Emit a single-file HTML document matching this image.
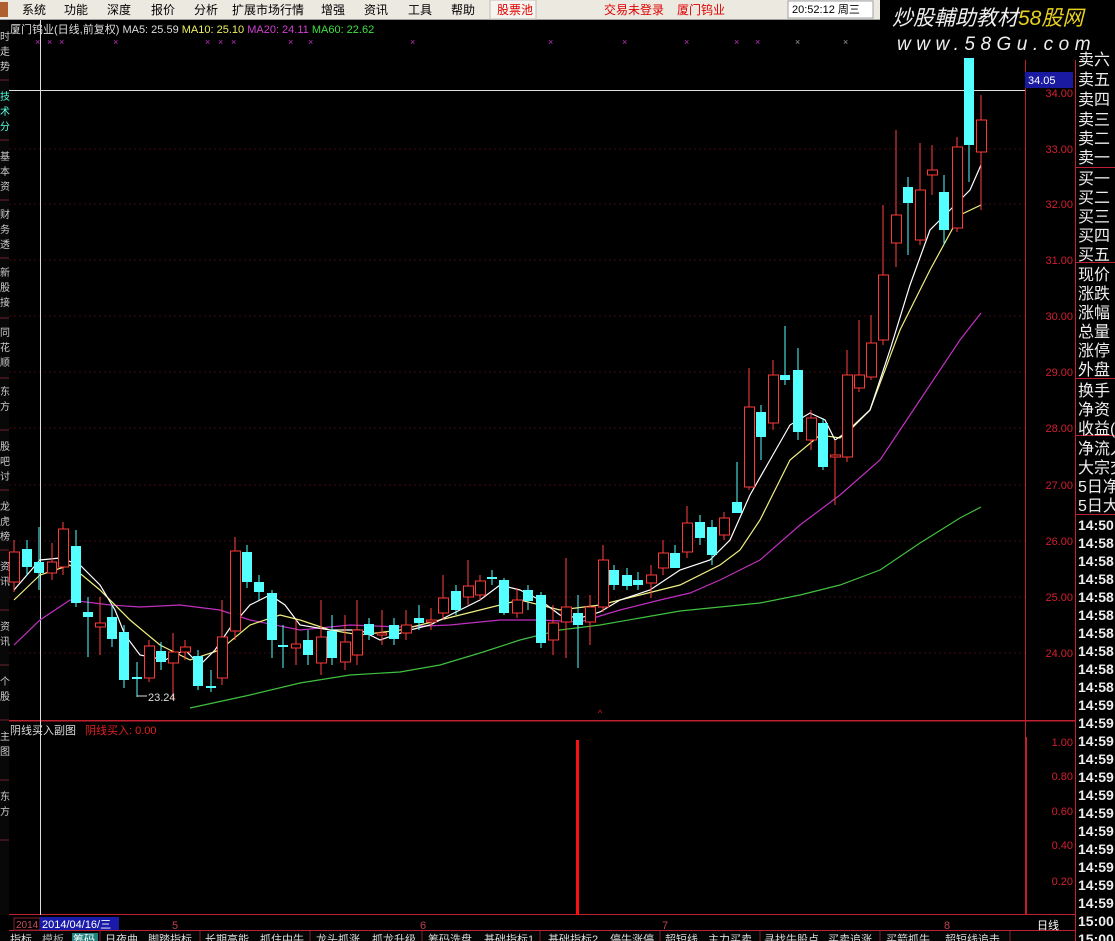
<!DOCTYPE html>
<html><head><meta charset="utf-8"><style>
html,body{margin:0;padding:0;background:#000;width:1115px;height:941px;overflow:hidden}
svg{display:block}
text{font-family:"Liberation Sans","Noto Sans CJK SC",sans-serif}
</style></head><body>
<svg width="1115" height="941" viewBox="0 0 1115 941" xmlns="http://www.w3.org/2000/svg">
<rect width="1115" height="941" fill="#000"/>
<rect x="0" y="0" width="880" height="20" fill="#ece9e1"/>
<rect x="0" y="19" width="880" height="1" fill="#a0a0a0"/>
<rect x="0" y="2" width="8" height="15" fill="#b06030"/>
<g font-size="12" fill="#000">
<text x="22" y="14">系统</text><text x="64" y="14">功能</text><text x="107" y="14">深度</text><text x="151" y="14">报价</text><text x="194" y="14">分析</text><text x="232" y="14">扩展市场行情</text><text x="321" y="14">增强</text><text x="364" y="14">资讯</text><text x="408" y="14">工具</text><text x="451" y="14">帮助</text>
</g>
<rect x="490" y="0" width="46" height="19" fill="#f6f4ee" stroke="#c0c0c0"/>
<text x="497" y="14" font-size="12" fill="#e00000">股票池</text>
<text x="604" y="14" font-size="12" fill="#e00000">交易未登录</text>
<text x="677" y="14" font-size="12" fill="#e00000">厦门钨业</text>
<rect x="788" y="1" width="85" height="17" fill="#fff" stroke="#a0a0a0"/>
<text x="792" y="13" font-size="11" fill="#000">20:52:12 周三</text>
<text x="892" y="25" font-size="21" font-style="italic" fill="#eee">炒股輔助教材<tspan fill="#e8d020">58股网</tspan></text>
<text x="897" y="50" font-size="19" font-style="italic" fill="#eee" letter-spacing="5.5">www.58Gu.com</text>
<rect x="0" y="20" width="9" height="895" fill="#080808"/>
<g stroke="#702030" stroke-width="1">
<line x1="0" y1="80" x2="9" y2="80"/><line x1="0" y1="140" x2="9" y2="140"/><line x1="0" y1="200" x2="9" y2="200"/><line x1="0" y1="258" x2="9" y2="258"/><line x1="0" y1="318" x2="9" y2="318"/><line x1="0" y1="378" x2="9" y2="378"/><line x1="0" y1="430" x2="9" y2="430"/><line x1="0" y1="490" x2="9" y2="490"/><line x1="0" y1="550" x2="9" y2="550"/><line x1="0" y1="610" x2="9" y2="610"/><line x1="0" y1="665" x2="9" y2="665"/><line x1="0" y1="720" x2="9" y2="720"/><line x1="0" y1="780" x2="9" y2="780"/><line x1="0" y1="840" x2="9" y2="840"/>
</g>
<g font-size="10" fill="#ccc">
<text x="0" y="40">时</text><text x="0" y="55">走</text><text x="0" y="70">势</text>
<text x="0" y="100" fill="#5fd">技</text><text x="0" y="115" fill="#5fd">术</text><text x="0" y="130" fill="#5fd">分</text>
<text x="0" y="160">基</text><text x="0" y="175">本</text><text x="0" y="190">资</text>
<text x="0" y="218">财</text><text x="0" y="233">务</text><text x="0" y="248">透</text>
<text x="0" y="276">新</text><text x="0" y="291">股</text><text x="0" y="306">接</text>
<text x="0" y="336">同</text><text x="0" y="351">花</text><text x="0" y="366">顺</text>
<text x="0" y="395">东</text><text x="0" y="410">方</text>
<text x="0" y="450">股</text><text x="0" y="465">吧</text><text x="0" y="480">讨</text>
<text x="0" y="510">龙</text><text x="0" y="525">虎</text><text x="0" y="540">榜</text>
<text x="0" y="570">资</text><text x="0" y="585">讯</text>
<text x="0" y="630">资</text><text x="0" y="645">讯</text>
<text x="0" y="685">个</text><text x="0" y="700">股</text>
<text x="0" y="740">主</text><text x="0" y="755">图</text>
<text x="0" y="800">东</text><text x="0" y="815">方</text>
</g>
<g stroke="#3a0a10" stroke-width="1" stroke-dasharray="2,3">
<line x1="9" y1="149" x2="1025" y2="149"/><line x1="9" y1="204" x2="1025" y2="204"/><line x1="9" y1="260" x2="1025" y2="260"/><line x1="9" y1="316" x2="1025" y2="316"/><line x1="9" y1="372" x2="1025" y2="372"/><line x1="9" y1="428" x2="1025" y2="428"/><line x1="9" y1="485" x2="1025" y2="485"/><line x1="9" y1="541" x2="1025" y2="541"/><line x1="9" y1="597" x2="1025" y2="597"/><line x1="9" y1="653" x2="1025" y2="653"/>
</g>
<text x="10" y="33" font-size="11" fill="#ddd">厦门钨业(日线,前复权) MA5: 25.59 <tspan fill="#f0f060">MA10: 25.10</tspan> <tspan fill="#d040d0">MA20: 24.11</tspan> <tspan fill="#40e040">MA60: 22.62</tspan></text>
<g font-size="9" fill="#c030c0">
<text x="35" y="45">×</text><text x="47" y="45">×</text><text x="59" y="45">×</text><text x="113" y="45">×</text><text x="205" y="45">×</text><text x="218" y="45">×</text><text x="231" y="45">×</text><text x="288" y="45">×</text><text x="308" y="45">×</text><text x="410" y="45">×</text><text x="548" y="45">×</text><text x="622" y="45">×</text><text x="684" y="45">×</text><text x="734" y="45">×</text><text x="755" y="45">×</text><text x="795" y="45" fill="#999">×</text><text x="843" y="45" fill="#999">×</text>
</g>
<rect x="1025" y="60" width="1" height="855" fill="#c02030"/>
<rect x="1075" y="60" width="1" height="881" fill="#c02030"/>
<rect x="9" y="720" width="1066" height="1.5" fill="#c02030"/>
<rect x="9" y="914" width="1066" height="1" fill="#c02030"/>
<rect x="9" y="930" width="1066" height="1" fill="#c02030"/>
<rect x="1026" y="737" width="1" height="178" fill="#c02030"/>
<g font-size="11" fill="#d02030" text-anchor="end">
<text x="1073" y="97">34.00</text><text x="1073" y="153">33.00</text><text x="1073" y="208">32.00</text><text x="1073" y="264">31.00</text><text x="1073" y="320">30.00</text><text x="1073" y="376">29.00</text><text x="1073" y="432">28.00</text><text x="1073" y="489">27.00</text><text x="1073" y="545">26.00</text><text x="1073" y="601">25.00</text><text x="1073" y="657">24.00</text>
<text x="1073" y="746">1.00</text><text x="1073" y="780">0.80</text><text x="1073" y="815">0.60</text><text x="1073" y="849">0.40</text><text x="1073" y="885">0.20</text>
</g>
<rect x="1025" y="72" width="48" height="16" fill="#1a1aa0"/>
<text x="1028" y="84" font-size="11" fill="#fff">34.05</text>
<rect x="40" y="20" width="1" height="895" fill="#ddd"/>
<rect x="9" y="90" width="1016" height="1" fill="#ddd"/>
<rect x="1075" y="167" width="40" height="1" fill="#c02030"/>
<rect x="1075" y="262" width="40" height="1" fill="#c02030"/>
<rect x="1075" y="378" width="40" height="1" fill="#c02030"/>
<rect x="1075" y="435" width="40" height="1" fill="#c02030"/>
<rect x="1075" y="514" width="40" height="1" fill="#c02030"/>
<g font-size="16" fill="#eee">
<text x="1078" y="65">卖六</text><text x="1078" y="85">卖五</text><text x="1078" y="105">卖四</text><text x="1078" y="125">卖三</text><text x="1078" y="144">卖二</text><text x="1078" y="163">卖一</text>
<text x="1078" y="184">买一</text><text x="1078" y="203">买二</text><text x="1078" y="222">买三</text><text x="1078" y="241">买四</text><text x="1078" y="260">买五</text>
<text x="1078" y="280">现价</text><text x="1078" y="299">涨跌</text><text x="1078" y="318">涨幅</text><text x="1078" y="337">总量</text><text x="1078" y="356">涨停</text><text x="1078" y="375">外盘</text>
<text x="1078" y="396">换手</text><text x="1078" y="415">净资</text><text x="1078" y="434">收益(</text>
<text x="1078" y="454">净流入</text><text x="1078" y="473">大宗交</text><text x="1078" y="492">5日净</text><text x="1078" y="511">5日大</text>
</g>
<g font-size="14" font-weight="bold" fill="#eee">
<text x="1078" y="530">14:50</text><text x="1078" y="548">14:58</text><text x="1078" y="566">14:58</text><text x="1078" y="584">14:58</text><text x="1078" y="602">14:58</text><text x="1078" y="620">14:58</text><text x="1078" y="638">14:58</text><text x="1078" y="656">14:58</text><text x="1078" y="674">14:58</text><text x="1078" y="692">14:58</text><text x="1078" y="710">14:59</text><text x="1078" y="728">14:59</text><text x="1078" y="746">14:59</text><text x="1078" y="764">14:59</text><text x="1078" y="782">14:59</text><text x="1078" y="800">14:59</text><text x="1078" y="818">14:59</text><text x="1078" y="836">14:59</text><text x="1078" y="854">14:59</text><text x="1078" y="872">14:59</text><text x="1078" y="890">14:59</text><text x="1078" y="908">14:59</text><text x="1078" y="926">15:00</text><text x="1078" y="944">15:00</text>
</g>
<g fill="none" stroke-width="1.2">
<polyline stroke="#c030c0" points="14,645 40,620 70,600 110,605 140,607 180,605 220,610 250,620 300,630 350,625 400,627 450,625 500,620 540,620 580,622 620,610 660,600 690,593 720,580 760,560 800,525 840,495 880,460 920,400 960,340 981,313"/>
<polyline stroke="#40c040" points="190,708 250,695 300,683 350,675 400,672 440,665 480,653 520,640 560,630 600,625 640,618 680,611 720,607 760,603 800,595 840,585 880,570 920,543 960,518 981,507"/>
<polyline stroke="#f0f080" points="14,600 40,575 70,565 100,590 130,620 160,645 190,660 220,650 250,625 280,615 300,620 330,630 360,635 400,630 440,620 480,610 520,600 560,610 600,605 640,595 680,585 720,565 740,550 760,520 790,460 820,435 840,438 870,410 900,330 930,270 960,215 981,205"/>
<polyline stroke="#fff" points="14,590 40,560 60,558 80,565 100,585 115,610 125,635 140,655 165,660 185,650 200,665 215,650 230,628 250,605 270,595 285,605 300,625 330,630 360,630 380,640 410,630 430,625 450,615 480,600 500,585 520,590 540,600 560,615 580,618 600,612 620,600 650,590 680,570 710,560 730,540 750,495 770,460 790,425 810,413 825,420 835,440 850,430 870,410 890,350 910,285 930,230 950,210 970,190 981,165"/>
</g>
<g stroke-width="1">
<g stroke="#ff4040">
<line x1="14" y1="540" x2="14" y2="592"/><line x1="52" y1="543" x2="52" y2="580"/><line x1="63" y1="522" x2="63" y2="575"/><line x1="100" y1="597" x2="100" y2="655"/><line x1="149" y1="640" x2="149" y2="682"/><line x1="173" y1="633" x2="173" y2="700"/><line x1="185" y1="640" x2="185" y2="660"/><line x1="222" y1="600" x2="222" y2="685"/><line x1="235" y1="537" x2="235" y2="640"/>
<line x1="296" y1="620" x2="296" y2="665"/><line x1="321" y1="600" x2="321" y2="675"/><line x1="345" y1="615" x2="345" y2="670"/><line x1="357" y1="600" x2="357" y2="665"/><line x1="382" y1="610" x2="382" y2="645"/><line x1="406" y1="610" x2="406" y2="640"/><line x1="431" y1="608" x2="431" y2="630"/><line x1="443" y1="575" x2="443" y2="620"/><line x1="468" y1="560" x2="468" y2="605"/><line x1="480" y1="575" x2="480" y2="600"/><line x1="517" y1="588" x2="517" y2="618"/><line x1="553" y1="605" x2="553" y2="655"/><line x1="566" y1="558" x2="566" y2="658"/><line x1="590" y1="595" x2="590" y2="645"/><line x1="603" y1="545" x2="603" y2="612"/><line x1="651" y1="565" x2="651" y2="598"/><line x1="663" y1="540" x2="663" y2="575"/>
<line x1="687" y1="506" x2="687" y2="558"/><line x1="724" y1="512" x2="724" y2="540"/><line x1="749" y1="368" x2="749" y2="490"/><line x1="773" y1="360" x2="773" y2="430"/><line x1="811" y1="410" x2="811" y2="450"/><line x1="835" y1="440" x2="835" y2="505"/><line x1="847" y1="350" x2="847" y2="462"/><line x1="859" y1="320" x2="859" y2="392"/><line x1="871" y1="315" x2="871" y2="380"/><line x1="883" y1="205" x2="883" y2="345"/><line x1="896" y1="130" x2="896" y2="267"/><line x1="920" y1="143" x2="920" y2="245"/><line x1="932" y1="145" x2="932" y2="195"/><line x1="957" y1="137" x2="957" y2="232"/><line x1="981" y1="95" x2="981" y2="210"/>
</g>
<g stroke="#54ffff">
<line x1="27" y1="540" x2="27" y2="575"/><line x1="39" y1="527" x2="39" y2="590"/><line x1="76" y1="530" x2="76" y2="607"/><line x1="88" y1="597" x2="88" y2="657"/><line x1="112" y1="605" x2="112" y2="647"/><line x1="124" y1="625" x2="124" y2="688"/><line x1="137" y1="662" x2="137" y2="697"/><line x1="161" y1="642" x2="161" y2="670"/><line x1="198" y1="650" x2="198" y2="690"/><line x1="211" y1="670" x2="211" y2="692"/><line x1="247" y1="545" x2="247" y2="588"/><line x1="259" y1="575" x2="259" y2="600"/><line x1="272" y1="590" x2="272" y2="658"/><line x1="283" y1="625" x2="283" y2="668"/><line x1="308" y1="630" x2="308" y2="665"/><line x1="332" y1="615" x2="332" y2="665"/><line x1="369" y1="618" x2="369" y2="640"/><line x1="394" y1="618" x2="394" y2="645"/><line x1="419" y1="605" x2="419" y2="630"/><line x1="456" y1="585" x2="456" y2="615"/><line x1="492" y1="570" x2="492" y2="585"/><line x1="504" y1="578" x2="504" y2="615"/><line x1="528" y1="585" x2="528" y2="610"/><line x1="541" y1="592" x2="541" y2="648"/><line x1="578" y1="595" x2="578" y2="668"/><line x1="614" y1="565" x2="614" y2="590"/><line x1="627" y1="568" x2="627" y2="590"/><line x1="638" y1="572" x2="638" y2="590"/><line x1="675" y1="545" x2="675" y2="568"/><line x1="700" y1="515" x2="700" y2="545"/><line x1="712" y1="520" x2="712" y2="565"/><line x1="737" y1="462" x2="737" y2="512"/><line x1="761" y1="405" x2="761" y2="460"/><line x1="785" y1="326" x2="785" y2="385"/><line x1="798" y1="348" x2="798" y2="440"/><line x1="823" y1="418" x2="823" y2="470"/><line x1="908" y1="177" x2="908" y2="255"/><line x1="944" y1="175" x2="944" y2="245"/><line x1="969" y1="58" x2="969" y2="182"/>
</g>
</g>
<g fill="#000" stroke="#ff3838" stroke-width="1">
<rect x="9.5" y="552" width="10" height="30"/><rect x="47.5" y="562" width="9" height="11"/><rect x="58.5" y="529" width="10" height="38"/><rect x="95.5" y="623" width="10" height="4"/><rect x="144.5" y="646" width="10" height="32"/><rect x="168.5" y="652" width="10" height="11"/><rect x="180.5" y="647" width="10" height="5"/><rect x="217.5" y="637" width="10" height="41"/><rect x="230.5" y="551" width="10" height="80"/>
<rect x="291.5" y="644" width="9" height="4"/><rect x="316.5" y="637" width="10" height="26"/><rect x="340.5" y="642" width="10" height="20"/><rect x="352.5" y="630" width="10" height="25"/><rect x="377.5" y="633" width="9" height="2"/><rect x="401.5" y="625" width="10" height="8"/><rect x="426.5" y="620" width="10" height="2"/><rect x="438.5" y="598" width="10" height="15"/><rect x="463.5" y="586" width="10" height="11"/><rect x="475.5" y="581" width="10" height="14"/><rect x="512.5" y="600" width="10" height="13"/><rect x="548.5" y="623" width="10" height="17"/><rect x="561.5" y="607" width="10" height="15"/><rect x="585.5" y="607" width="10" height="15"/><rect x="598.5" y="560" width="10" height="47"/><rect x="646.5" y="575" width="10" height="8"/><rect x="658.5" y="553" width="10" height="15"/>
<rect x="682.5" y="523" width="10" height="29"/><rect x="719.5" y="518" width="10" height="17"/><rect x="744.5" y="407" width="10" height="80"/><rect x="768.5" y="375" width="10" height="48"/><rect x="806.5" y="418" width="10" height="22"/><rect x="830.5" y="455" width="10" height="2"/><rect x="842.5" y="375" width="10" height="82"/><rect x="854.5" y="375" width="10" height="13"/><rect x="866.5" y="343" width="10" height="34"/><rect x="878.5" y="275" width="10" height="65"/><rect x="891.5" y="215" width="10" height="28"/><rect x="915.5" y="190" width="10" height="50"/><rect x="927.5" y="170" width="10" height="5"/><rect x="952.5" y="147" width="10" height="81"/><rect x="976.5" y="120" width="10" height="32"/>
</g>
<g fill="#54ffff">
<rect x="22" y="549" width="10" height="18"/><rect x="34" y="562" width="10" height="11"/><rect x="71" y="546" width="10" height="57"/><rect x="83" y="612" width="10" height="5"/><rect x="107" y="617" width="10" height="22"/><rect x="119" y="632" width="10" height="48"/><rect x="132" y="677" width="10" height="2"/><rect x="156" y="651" width="10" height="11"/><rect x="193" y="656" width="10" height="30"/><rect x="206" y="686" width="10" height="2"/><rect x="242" y="552" width="10" height="30"/><rect x="254" y="582" width="10" height="10"/><rect x="267" y="593" width="10" height="47"/><rect x="278" y="645" width="10" height="2"/><rect x="303" y="640" width="10" height="15"/><rect x="327" y="631" width="10" height="27"/><rect x="364" y="624" width="10" height="11"/><rect x="389" y="625" width="10" height="14"/><rect x="414" y="618" width="10" height="5"/><rect x="451" y="591" width="10" height="19"/><rect x="487" y="577" width="10" height="2"/><rect x="499" y="580" width="10" height="33"/><rect x="523" y="590" width="10" height="11"/><rect x="536" y="595" width="10" height="48"/><rect x="573" y="613" width="10" height="12"/><rect x="609" y="570" width="10" height="15"/><rect x="622" y="575" width="10" height="11"/><rect x="633" y="580" width="10" height="5"/><rect x="670" y="553" width="10" height="15"/><rect x="695" y="522" width="10" height="16"/><rect x="707" y="527" width="10" height="28"/><rect x="732" y="502" width="10" height="11"/><rect x="756" y="412" width="10" height="25"/><rect x="780" y="375" width="10" height="5"/><rect x="793" y="370" width="10" height="62"/><rect x="818" y="423" width="10" height="44"/><rect x="903" y="187" width="10" height="16"/><rect x="939" y="192" width="10" height="38"/><rect x="964" y="58" width="10" height="87"/>
</g>
<text x="148" y="701" font-size="11" fill="#ddd">23.24</text>
<line x1="137" y1="696" x2="147" y2="696" stroke="#ddd"/>
<text x="598" y="716" font-size="9" fill="#e02020">^</text>
<text x="10" y="734" font-size="11" fill="#ddd">阴线买入副图</text>
<text x="85" y="734" font-size="11" fill="#e02020">阴线买入: 0.00</text>
<rect x="576" y="740" width="3" height="175" fill="#ff1010"/>
<rect x="14" y="918" width="26" height="12" fill="none" stroke="#802030"/>
<text x="16" y="928" font-size="10" fill="#c05060">2014</text>
<rect x="40" y="917" width="79" height="13" fill="#1a1aa8"/>
<text x="42" y="928" font-size="11" fill="#fff">2014/04/16/三</text>
<g font-size="11" fill="#c04050">
<text x="172" y="929">5</text><text x="420" y="929">6</text><text x="662" y="929">7</text><text x="944" y="929">8</text>
</g>
<text x="1037" y="929" font-size="11" fill="#fff">日线</text>
<rect x="0" y="931" width="1075" height="10" fill="#050505"/>
<g font-size="11" fill="#ddd">
<text x="10" y="943">指标</text><text x="42" y="943" fill="#aaa">模板</text>
<rect x="72" y="933" width="26" height="8" fill="#208080"/><text x="73" y="943" fill="#fff">筹码</text>
<text x="105" y="943">日夜曲</text><text x="148" y="943">脚踏指标</text><text x="205" y="943">长期高能</text><text x="260" y="943">抓住中牛</text><text x="316" y="943">龙头抓涨</text><text x="372" y="943">抓龙升级</text><text x="428" y="943">筹码洗盘</text><text x="484" y="943">基础指标1</text><text x="548" y="943">基础指标2</text><text x="610" y="943">停牛涨停</text><text x="665" y="943">超短线</text><text x="708" y="943">主力买卖</text><text x="764" y="943">寻找牛股点</text><text x="828" y="943">买卖追涨</text><text x="886" y="943">买箭抓牛</text><text x="945" y="943">超短线追击</text>
</g>
<g stroke="#802030"><line x1="100" y1="931" x2="100" y2="941"/><line x1="200" y1="931" x2="200" y2="941"/><line x1="310" y1="931" x2="310" y2="941"/><line x1="422" y1="931" x2="422" y2="941"/><line x1="540" y1="931" x2="540" y2="941"/><line x1="660" y1="931" x2="660" y2="941"/><line x1="760" y1="931" x2="760" y2="941"/><line x1="880" y1="931" x2="880" y2="941"/><line x1="1010" y1="931" x2="1010" y2="941"/></g>
</svg>
</body></html>
